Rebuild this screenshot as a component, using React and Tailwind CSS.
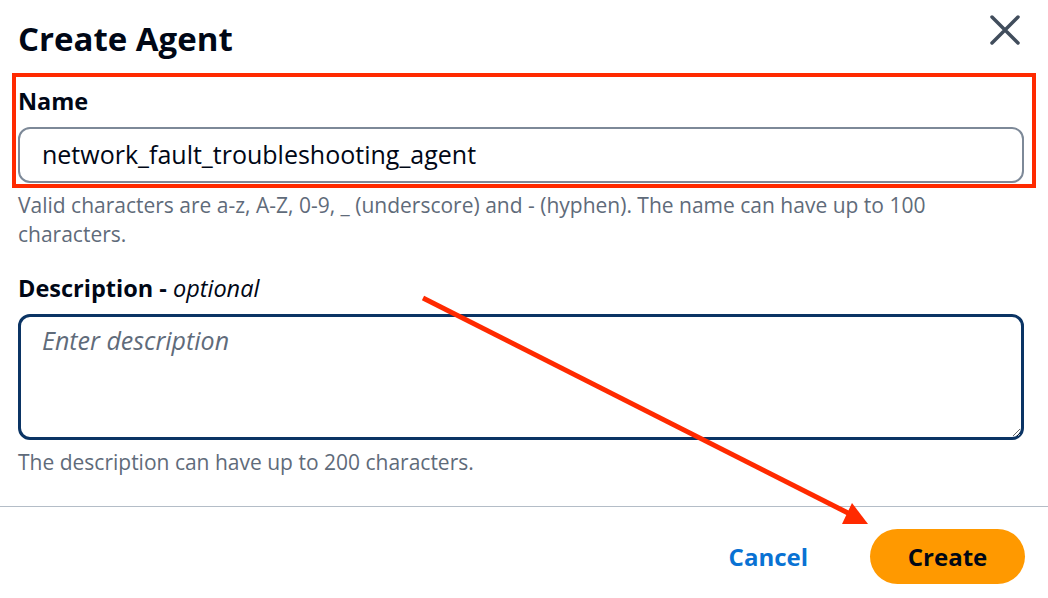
import React from "react";

export default function App() {
  return (
    <div
      className="relative w-[1048px] h-[598px] bg-white overflow-hidden"
      style={{ fontFamily: '"Open Sans", "Noto Sans", sans-serif' }}
    >
      <div className="pl-[18px] pr-[24px] pt-[17px]">
        <div className="flex justify-between items-start">
          <h1 className="text-[33px] leading-[44px] font-bold text-[#000716]">Create Agent</h1>
          <svg className="mt-[-3px] mr-[3px]" width="32" height="32" viewBox="0 0 32 32" fill="none">
            <path d="M3 3 L29 29 M29 3 L3 29" stroke="#414d5c" strokeWidth="3.5" strokeLinecap="round" />
          </svg>
        </div>

        <div className="mt-[25px] text-[23.5px] leading-[30px] font-bold text-[#000716]">Name</div>
        <div className="mt-[11px] h-[56px] border-2 border-[#7d8998] rounded-[12px] px-[22px] flex items-center text-[25px] text-[#000716]">
          network_fault_troubleshooting_agent
        </div>
        <p className="mt-[8px] text-[21px] leading-[29px] text-[#5f6b7a]">
          Valid characters are a-z, A-Z, 0-9, _ (underscore) and - (hyphen). The name can have up to 100 characters.
        </p>

        <div className="mt-[24px] text-[23.5px] leading-[30px] font-bold text-[#000716]">
          Description - <span className="italic font-normal">optional</span>
        </div>
        <textarea
          className="mt-[11px] block w-full h-[126px] border-[3px] border-[#0b3464] rounded-[12px] px-[21px] py-[8px] text-[25px] leading-[30px] text-[#000716] placeholder:text-[#5f6b7a] placeholder:italic outline-none"
          style={{ fontFamily: '"Open Sans", "Noto Sans", sans-serif' }}
          placeholder="Enter description"
        />
        <p className="mt-[8px] text-[21px] leading-[29px] text-[#5f6b7a]">
          The description can have up to 200 characters.
        </p>
      </div>

      <div className="mt-[29px] h-px bg-[#b4bdc7]" />

      <div className="flex justify-end items-center pr-[23px] pt-[22px] gap-[62px]">
        <button className="text-[24px] font-bold text-[#0972d3] leading-[30px]">Cancel</button>
        <button className="w-[155px] h-[55px] rounded-full bg-[#ff9900] text-[24px] font-bold text-[#000716] leading-[30px]">
          Create
        </button>
      </div>

      {/* annotation overlays */}
      <div className="absolute left-[12px] top-[73px] w-[1024px] h-[115px] border-[4px] border-[#ff2a00] pointer-events-none" />
      <svg className="absolute left-0 top-0 pointer-events-none" width="1048" height="598" viewBox="0 0 1048 598">
        <line x1="423" y1="298" x2="850" y2="514" stroke="#ff2a00" strokeWidth="5" />
        <polygon points="852,503 842,524 868,524" fill="#ff2a00" />
      </svg>
    </div>
  );
}
